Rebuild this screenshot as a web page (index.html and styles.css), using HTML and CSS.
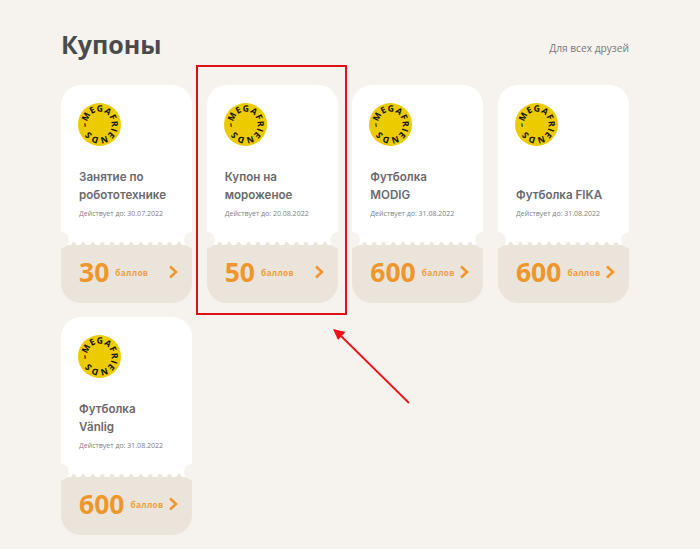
FILE: index.html
```html
<!DOCTYPE html>
<html lang="ru">
<head>
<meta charset="utf-8">
<title>Купоны</title>
<link rel="stylesheet" href="styles.css">
</head>
<body>
<svg class="defs" width="0" height="0" aria-hidden="true">
  <defs>
    <symbol id="logo" viewBox="0 0 43 43">
      <circle cx="21.5" cy="21.5" r="21.5" fill="#eccb00"/>
      <path id="ring" d="M9.800 24a12 12 0 1 1 23.400 -5a12 12 0 1 1-23.400 5" fill="none"/>
      <text class="logo-text"><textPath href="#ring" textLength="74" lengthAdjust="spacing">–MEGAFRIENDS</textPath></text>
    </symbol>
    <symbol id="chev" viewBox="0 0 10 14">
      <path d="M2 1.500L8 7L2 12.500" fill="none" stroke="#ee962b" stroke-width="2.600"/>
    </symbol>
  </defs>
</svg>
<main class="page">
  <header class="head">
    <h1 class="title">Купоны</h1>
    <a class="filter">Для всех друзей</a>
  </header>
  <section class="grid">
    <article class="coupon">
      <div class="top">
        <svg class="logo"><use href="#logo"/></svg>
        <h2 class="name">Занятие по робототехнике</h2>
        <p class="date">Действует до: 30.07.2022</p>
      </div>
      <div class="scallop"></div>
      <div class="bottom"><span class="num">30</span><span class="unit">баллов</span><svg class="chev"><use href="#chev"/></svg></div>
    </article>
    <article class="coupon">
      <div class="top">
        <svg class="logo"><use href="#logo"/></svg>
        <h2 class="name">Купон на мороженое</h2>
        <p class="date">Действует до: 20.08.2022</p>
      </div>
      <div class="scallop"></div>
      <div class="bottom"><span class="num">50</span><span class="unit">баллов</span><svg class="chev"><use href="#chev"/></svg></div>
    </article>
    <article class="coupon">
      <div class="top">
        <svg class="logo"><use href="#logo"/></svg>
        <h2 class="name">Футболка MODIG</h2>
        <p class="date">Действует до: 31.08.2022</p>
      </div>
      <div class="scallop"></div>
      <div class="bottom"><span class="num">600</span><span class="unit">баллов</span><svg class="chev"><use href="#chev"/></svg></div>
    </article>
    <article class="coupon">
      <div class="top">
        <svg class="logo"><use href="#logo"/></svg>
        <h2 class="name">Футболка FIKA</h2>
        <p class="date">Действует до: 31.08.2022</p>
      </div>
      <div class="scallop"></div>
      <div class="bottom"><span class="num">600</span><span class="unit">баллов</span><svg class="chev"><use href="#chev"/></svg></div>
    </article>
    <article class="coupon">
      <div class="top">
        <svg class="logo"><use href="#logo"/></svg>
        <h2 class="name">Футболка Vänlig</h2>
        <p class="date">Действует до: 31.08.2022</p>
      </div>
      <div class="scallop"></div>
      <div class="bottom"><span class="num">600</span><span class="unit">баллов</span><svg class="chev"><use href="#chev"/></svg></div>
    </article>
  </section>
</main>
<div class="mark"></div>
<svg class="arrow" width="90" height="90" viewBox="0 0 90 90">
  <path d="M79 83L10 15" stroke="#ee1218" stroke-width="1.800" fill="none"/>
  <path d="M3 9L15.500 12L8 20Z" fill="#ee1218"/>
</svg>
</body>
</html>
```
FILE: styles.css
```css
* { box-sizing: border-box; }
html, body { margin: 0; height: 549px; overflow: hidden; }
body {
  position: relative;
  background: #f6f3ef;
  font-family: "Open Sans", sans-serif;
}
.defs { position: absolute; }
.page { padding: 25px 71px 0 61px; }
.head {
  display: flex;
  justify-content: space-between;
  align-items: center;
  height: 38px;
  margin-bottom: 22px;
}
.title {
  margin: 0;
  font-size: 25px;
  line-height: 38px;
  font-weight: 700;
  color: #4a4a4c;
}
.filter {
  font-size: 10.200px;
  line-height: 16px;
  color: #77777a;
  margin-top: 8px;
}
.grid {
  display: grid;
  grid-template-columns: repeat(4, 131px);
  justify-content: space-between;
  row-gap: 14px;
}
.coupon {
  position: relative;
  display: flex;
  flex-direction: column;
  height: 218px;
}
.coupon::before, .coupon::after {
  content: "";
  position: absolute;
  top: 147px;
  width: 16px;
  height: 16px;
  border-radius: 50%;
  background: #f6f3ef;
}
.coupon::before { left: -8px; }
.coupon::after { right: -8px; }
.top {
  height: 157px;
  padding: 18px 20px 0 18px;
  background: #fff;
  border-radius: 20px 20px 0 0;
  display: flex;
  flex-direction: column;
}
.logo { width: 43px; height: 43px; display: block; flex: none; margin-left: -1px; }
.logo-text {
  font-family: "Open Sans", sans-serif;
  font-size: 8.800px;
  font-weight: 700;
  fill: #14120a;
}
.name {
  margin: auto 0 0;
  font-family: "Inter", sans-serif;
  font-size: 11.600px;
  line-height: 17.500px;
  font-weight: 600;
  color: #6a696b;
}
.date {
  margin: 4px -10px 23px 0;
  font-size: 7px;
  line-height: 11px;
  color: #808083;
}
.scallop {
  height: 3px;
  background-color: #ebe4da;
  background-image: radial-gradient(circle at 50% 0, #fff 0, #fff 3.200px, transparent 3.800px);
  background-size: 9.600px 3px;
  background-position: 3px 0;
}
.bottom {
  flex: 1;
  display: flex;
  align-items: center;
  padding: 0 14px 4px 18px;
  background: #ebe4da;
  border-radius: 0 0 20px 20px;
}
.num {
  font-size: 26.500px;
  line-height: 36px;
  font-weight: 700;
  color: #ee962b;
}
.unit {
  margin-left: 6px;
  font-size: 8.300px;
  font-weight: 700;
  letter-spacing: 0.3px;
  color: #ee9f45;
}
.chev { width: 10px; height: 14px; margin-left: auto; }
.mark {
  position: absolute;
  left: 196px;
  top: 65px;
  width: 151px;
  height: 250px;
  border: 2px solid #df0f15;
}
.arrow { position: absolute; left: 330px; top: 320px; }
```
